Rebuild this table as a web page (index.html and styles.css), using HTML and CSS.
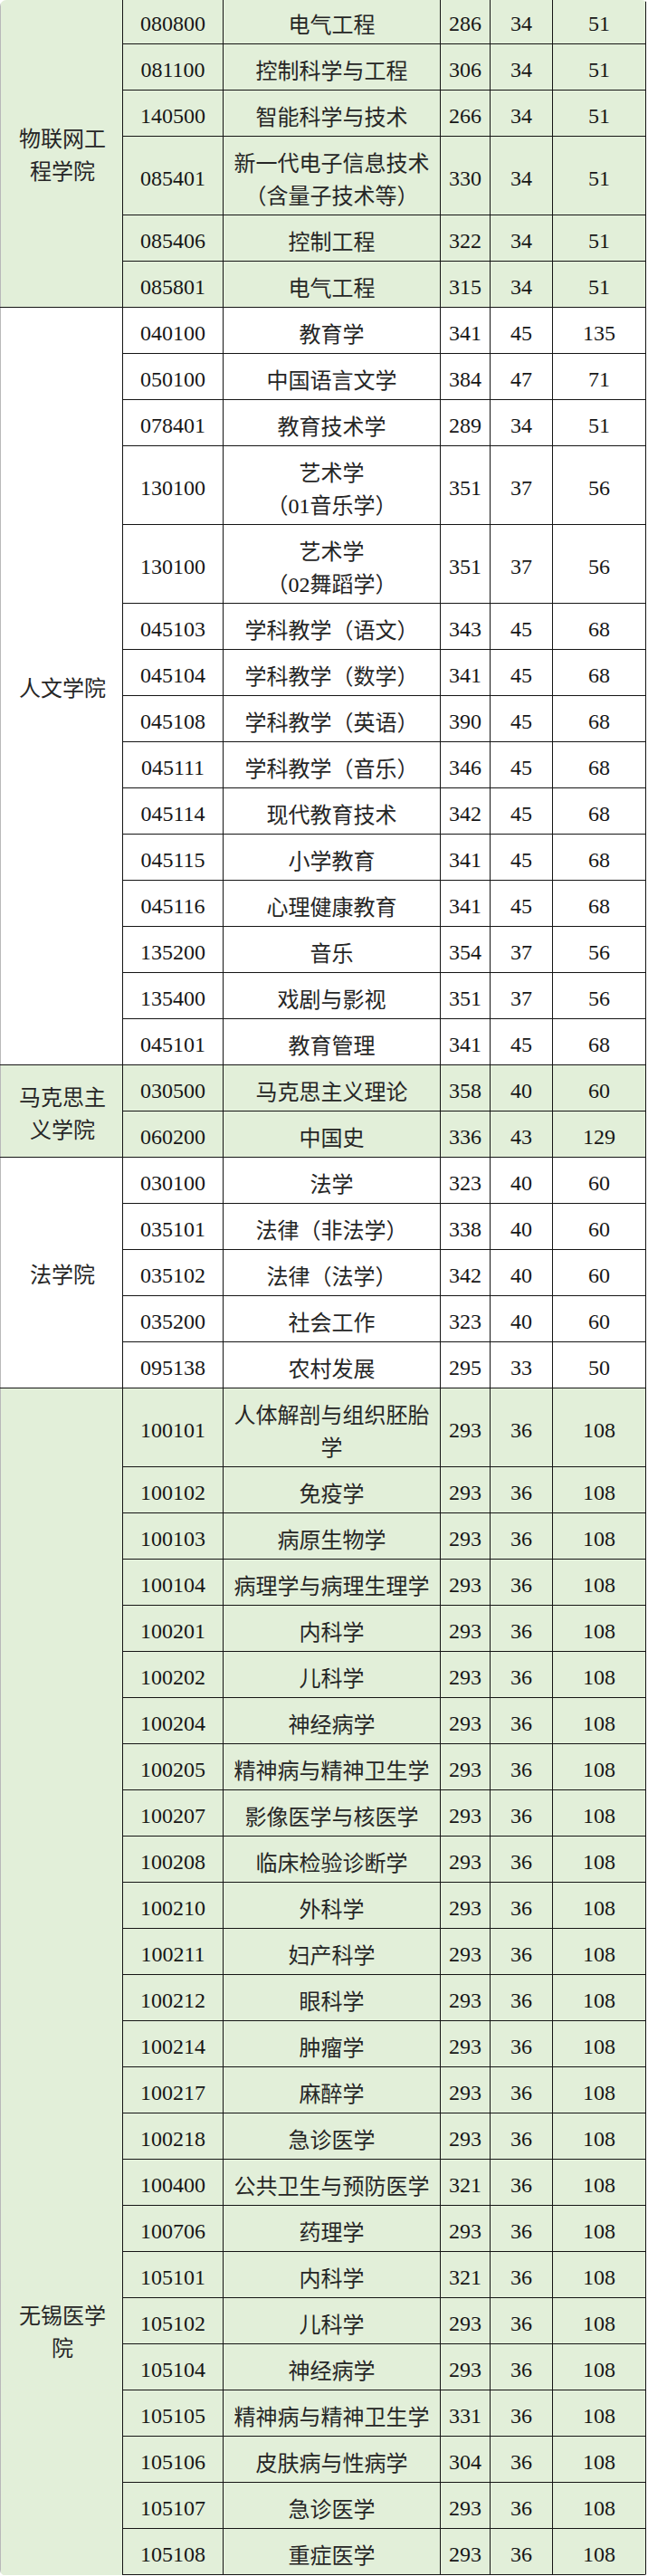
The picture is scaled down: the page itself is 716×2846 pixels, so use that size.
FILE: index.html
```html
<!DOCTYPE html>
<html lang="zh-CN">
<head>
<meta charset="utf-8">
<title>复试分数线</title>
<link rel="stylesheet" href="styles.css">
</head>
<body>
<div class="sheet">
<table class="grid">
<colgroup>
<col class="c-college"><col class="c-code"><col class="c-name"><col class="c-score"><col class="c-a"><col class="c-b">
</colgroup>
<tbody class="green">
<tr><td class="college" rowspan="6">物联网工程学院</td><td class="code">080800</td><td class="name">电气工程</td><td class="num">286</td><td class="num">34</td><td class="num">51</td></tr>
<tr><td class="code">081100</td><td class="name">控制科学与工程</td><td class="num">306</td><td class="num">34</td><td class="num">51</td></tr>
<tr><td class="code">140500</td><td class="name">智能科学与技术</td><td class="num">266</td><td class="num">34</td><td class="num">51</td></tr>
<tr><td class="code">085401</td><td class="name">新一代电子信息技术（含量子技术等）</td><td class="num">330</td><td class="num">34</td><td class="num">51</td></tr>
<tr><td class="code">085406</td><td class="name">控制工程</td><td class="num">322</td><td class="num">34</td><td class="num">51</td></tr>
<tr><td class="code">085801</td><td class="name">电气工程</td><td class="num">315</td><td class="num">34</td><td class="num">51</td></tr>
</tbody>
<tbody class="white">
<tr><td class="college" rowspan="15">人文学院</td><td class="code">040100</td><td class="name">教育学</td><td class="num">341</td><td class="num">45</td><td class="num">135</td></tr>
<tr><td class="code">050100</td><td class="name">中国语言文学</td><td class="num">384</td><td class="num">47</td><td class="num">71</td></tr>
<tr><td class="code">078401</td><td class="name">教育技术学</td><td class="num">289</td><td class="num">34</td><td class="num">51</td></tr>
<tr><td class="code">130100</td><td class="name">艺术学<br>（<span class="d">01</span>音乐学）</td><td class="num">351</td><td class="num">37</td><td class="num">56</td></tr>
<tr><td class="code">130100</td><td class="name">艺术学<br>（<span class="d">02</span>舞蹈学）</td><td class="num">351</td><td class="num">37</td><td class="num">56</td></tr>
<tr><td class="code">045103</td><td class="name">学科教学（语文）</td><td class="num">343</td><td class="num">45</td><td class="num">68</td></tr>
<tr><td class="code">045104</td><td class="name">学科教学（数学）</td><td class="num">341</td><td class="num">45</td><td class="num">68</td></tr>
<tr><td class="code">045108</td><td class="name">学科教学（英语）</td><td class="num">390</td><td class="num">45</td><td class="num">68</td></tr>
<tr><td class="code">045111</td><td class="name">学科教学（音乐）</td><td class="num">346</td><td class="num">45</td><td class="num">68</td></tr>
<tr><td class="code">045114</td><td class="name">现代教育技术</td><td class="num">342</td><td class="num">45</td><td class="num">68</td></tr>
<tr><td class="code">045115</td><td class="name">小学教育</td><td class="num">341</td><td class="num">45</td><td class="num">68</td></tr>
<tr><td class="code">045116</td><td class="name">心理健康教育</td><td class="num">341</td><td class="num">45</td><td class="num">68</td></tr>
<tr><td class="code">135200</td><td class="name">音乐</td><td class="num">354</td><td class="num">37</td><td class="num">56</td></tr>
<tr><td class="code">135400</td><td class="name">戏剧与影视</td><td class="num">351</td><td class="num">37</td><td class="num">56</td></tr>
<tr><td class="code">045101</td><td class="name">教育管理</td><td class="num">341</td><td class="num">45</td><td class="num">68</td></tr>
</tbody>
<tbody class="green">
<tr><td class="college" rowspan="2">马克思主义学院</td><td class="code">030500</td><td class="name">马克思主义理论</td><td class="num">358</td><td class="num">40</td><td class="num">60</td></tr>
<tr><td class="code">060200</td><td class="name">中国史</td><td class="num">336</td><td class="num">43</td><td class="num">129</td></tr>
</tbody>
<tbody class="white">
<tr><td class="college" rowspan="5">法学院</td><td class="code">030100</td><td class="name">法学</td><td class="num">323</td><td class="num">40</td><td class="num">60</td></tr>
<tr><td class="code">035101</td><td class="name">法律（非法学）</td><td class="num">338</td><td class="num">40</td><td class="num">60</td></tr>
<tr><td class="code">035102</td><td class="name">法律（法学）</td><td class="num">342</td><td class="num">40</td><td class="num">60</td></tr>
<tr><td class="code">035200</td><td class="name">社会工作</td><td class="num">323</td><td class="num">40</td><td class="num">60</td></tr>
<tr><td class="code">095138</td><td class="name">农村发展</td><td class="num">295</td><td class="num">33</td><td class="num">50</td></tr>
</tbody>
<tbody class="green">
<tr><td class="college college-open" rowspan="25">无锡医学院</td><td class="code">100101</td><td class="name">人体解剖与组织胚胎学</td><td class="num">293</td><td class="num">36</td><td class="num">108</td></tr>
<tr><td class="code">100102</td><td class="name">免疫学</td><td class="num">293</td><td class="num">36</td><td class="num">108</td></tr>
<tr><td class="code">100103</td><td class="name">病原生物学</td><td class="num">293</td><td class="num">36</td><td class="num">108</td></tr>
<tr><td class="code">100104</td><td class="name">病理学与病理生理学</td><td class="num">293</td><td class="num">36</td><td class="num">108</td></tr>
<tr><td class="code">100201</td><td class="name">内科学</td><td class="num">293</td><td class="num">36</td><td class="num">108</td></tr>
<tr><td class="code">100202</td><td class="name">儿科学</td><td class="num">293</td><td class="num">36</td><td class="num">108</td></tr>
<tr><td class="code">100204</td><td class="name">神经病学</td><td class="num">293</td><td class="num">36</td><td class="num">108</td></tr>
<tr><td class="code">100205</td><td class="name">精神病与精神卫生学</td><td class="num">293</td><td class="num">36</td><td class="num">108</td></tr>
<tr><td class="code">100207</td><td class="name">影像医学与核医学</td><td class="num">293</td><td class="num">36</td><td class="num">108</td></tr>
<tr><td class="code">100208</td><td class="name">临床检验诊断学</td><td class="num">293</td><td class="num">36</td><td class="num">108</td></tr>
<tr><td class="code">100210</td><td class="name">外科学</td><td class="num">293</td><td class="num">36</td><td class="num">108</td></tr>
<tr><td class="code">100211</td><td class="name">妇产科学</td><td class="num">293</td><td class="num">36</td><td class="num">108</td></tr>
<tr><td class="code">100212</td><td class="name">眼科学</td><td class="num">293</td><td class="num">36</td><td class="num">108</td></tr>
<tr><td class="code">100214</td><td class="name">肿瘤学</td><td class="num">293</td><td class="num">36</td><td class="num">108</td></tr>
<tr><td class="code">100217</td><td class="name">麻醉学</td><td class="num">293</td><td class="num">36</td><td class="num">108</td></tr>
<tr><td class="code">100218</td><td class="name">急诊医学</td><td class="num">293</td><td class="num">36</td><td class="num">108</td></tr>
<tr><td class="code">100400</td><td class="name">公共卫生与预防医学</td><td class="num">321</td><td class="num">36</td><td class="num">108</td></tr>
<tr><td class="code">100706</td><td class="name">药理学</td><td class="num">293</td><td class="num">36</td><td class="num">108</td></tr>
<tr><td class="code">105101</td><td class="name">内科学</td><td class="num">321</td><td class="num">36</td><td class="num">108</td></tr>
<tr><td class="code">105102</td><td class="name">儿科学</td><td class="num">293</td><td class="num">36</td><td class="num">108</td></tr>
<tr><td class="code">105104</td><td class="name">神经病学</td><td class="num">293</td><td class="num">36</td><td class="num">108</td></tr>
<tr><td class="code">105105</td><td class="name">精神病与精神卫生学</td><td class="num">331</td><td class="num">36</td><td class="num">108</td></tr>
<tr><td class="code">105106</td><td class="name">皮肤病与性病学</td><td class="num">304</td><td class="num">36</td><td class="num">108</td></tr>
<tr><td class="code">105107</td><td class="name">急诊医学</td><td class="num">293</td><td class="num">36</td><td class="num">108</td></tr>
<tr><td class="code">105108</td><td class="name">重症医学</td><td class="num">293</td><td class="num">36</td><td class="num">108</td></tr>
</tbody>
</table>
</div>
</body>
</html>
```

FILE: styles.css
```css
html, body {
  margin: 0;
  padding: 0;
  background: #ffffff;
}

.sheet {
  width: 716px;
  height: 2846px;
  overflow: hidden;
  border-radius: 7px;
  background: #ffffff;
}

.grid {
  border-collapse: collapse;
  table-layout: fixed;
  width: 714px;
  margin-top: -3px;
  color: #161616;
  font-size: 24px;
  line-height: 36px;
  font-family: "Liberation Serif", "Noto Sans CJK SC", serif;
}

.c-college { width: 135px; }
.c-code { width: 111px; }
.c-name { width: 240px; }
.c-score { width: 55px; }
.c-a { width: 69px; }
.c-b { width: 103px; }

.grid td {
  border: 1px solid #151515;
  padding: 10px 4px 4px;
  text-align: center;
  vertical-align: middle;
  overflow: hidden;
}

.green td { background: #e2efd9; }
.white td { background: #ffffff; }

.grid td.college {
  border-left: 1px solid #b9b9b9;
  padding: 6px 16px 4px 18px;
  font-family: "Noto Sans CJK SC", "Liberation Serif", serif;
  color: #262626;
}

.grid td.college-open {
  vertical-align: bottom;
  padding-bottom: 234px;
  border-bottom: none;
}

.grid td.name {
  padding: 10px 8px 4px;
  font-family: "Noto Sans CJK SC", "Liberation Serif", serif;
  color: #262626;
}

.name .d {
  font-family: "Liberation Serif", serif;
  line-height: 24px;
  color: #161616;
}

.grid td.num:last-child {
  border-right: 1px solid #151515;
}
```
